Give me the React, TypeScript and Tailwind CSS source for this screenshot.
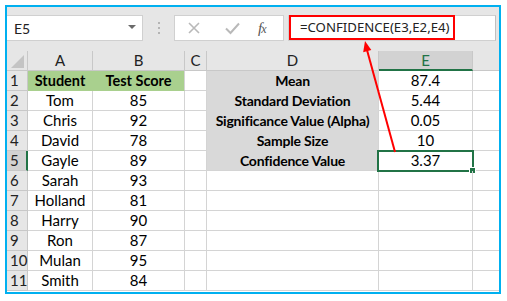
import React from "react"

const students: [string, number][] = [
  ["Tom", 85],
  ["Chris", 92],
  ["David", 78],
  ["Gayle", 89],
  ["Sarah", 93],
  ["Holland", 81],
  ["Harry", 90],
  ["Ron", 87],
  ["Mulan", 95],
  ["Smith", 84],
]

const stats: [string, string][] = [
  ["Mean", "87.4"],
  ["Standard Deviation", "5.44"],
  ["Significance Value (Alpha)", "0.05"],
  ["Sample Size", "10"],
  ["Confidence Value", "3.37"],
]

const cell = "h-[20px] shrink-0 flex items-center justify-center border-r border-b"

function FormulaBar() {
  return (
    <div className="h-[44px] shrink-0 flex items-start pt-[8px]">
      <div className="w-[136px] h-[26px] bg-white border border-[#d0d0d0] border-l-0 flex items-center justify-between pl-[7px] pr-[6px]">
        <span className="text-[14px] text-[#222]">E5</span>
        <span className="w-0 h-0 border-l-[4px] border-r-[4px] border-t-[4px] border-l-transparent border-r-transparent border-t-[#6a6a6a] mb-[3px]" />
      </div>
      <div className="w-[31px] h-[26px] flex flex-col items-center justify-center gap-[3px]">
        <span className="w-[2px] h-[2px] bg-[#b4b4b4]" />
        <span className="w-[2px] h-[2px] bg-[#b4b4b4]" />
        <span className="w-[2px] h-[2px] bg-[#b4b4b4]" />
      </div>
      <div className="w-[110px] h-[26px] bg-white border border-[#d0d0d0] flex items-center">
        <svg width="38" height="24" viewBox="0 0 38 24" className="shrink-0">
          <path d="M14 7 L24 17 M24 7 L14 17" stroke="#b9b9b9" strokeWidth="1.6" fill="none" />
        </svg>
        <svg width="38" height="24" viewBox="0 0 38 24" className="shrink-0">
          <path d="M13 12.5 L17.5 17 L26 7.5" stroke="#b9b9b9" strokeWidth="2" fill="none" />
        </svg>
        <span className="ml-[7px] text-[15px] italic text-[#555] font-['Liberation_Serif',serif] tracking-[-1px]">
          f<span className="text-[12px]">x</span>
        </span>
      </div>
      <div className="ml-[4px] flex-1 h-[26px] bg-white border border-[#d0d0d0] border-r-[#c0c0c0] mr-[3px] relative">
        <div className="absolute left-0 top-[-1px] w-[166px] h-[25px] border-2 border-[#ff0000] flex items-center pl-[9px]">
          <span className="text-[13.2px] text-[#222] font-['Noto_Sans',sans-serif]">=CONFIDENCE(E3,E2,E4)</span>
        </div>
      </div>
    </div>
  )
}

function HeaderRow() {
  const cols: [string, string][] = [
    ["A", "w-[65px]"],
    ["B", "w-[92px]"],
    ["C", "w-[22px]"],
    ["D", "w-[172px]"],
  ]
  return (
    <div className="flex text-[15px] text-[#222]">
      <div className={`${cell} w-[21px] bg-[#e6e6e6] border-[#c8c8c8] items-end justify-end pr-[3px] pb-[2px]`}>
        <svg width="13" height="13" viewBox="0 0 13 13">
          <polygon points="13,0 13,13 0,13" fill="#c4c4c4" />
        </svg>
      </div>
      {cols.map(([c, w]) => (
        <div key={c} className={`${cell} ${w} bg-[#e6e6e6] border-[#c8c8c8]`}>{c}</div>
      ))}
      <div className={`${cell} w-[94px] bg-[#d2d2d2] border-r-[#c8c8c8] border-b-2 border-b-[#217346] text-[#217346]`}>E</div>
      <div className={`${cell} flex-1 bg-[#e6e6e6] border-[#c8c8c8] border-r-0`} />
    </div>
  )
}

function Row({ n }: { n: number }) {
  const s = students[n - 2]
  const st = stats[n - 1]
  const sel = n === 5
  return (
    <div className="flex text-[15px] text-black">
      <div
        className={`${cell} w-[21px] justify-start pl-[3px] text-[#222] ${
          sel ? "bg-[#d2d2d2] border-b-[#c8c8c8] border-r-2 border-r-[#217346]" : "bg-[#e6e6e6] border-[#c8c8c8]"
        }`}
      >
        {n}
      </div>
      {n === 1 ? (
        <>
          <div className={`${cell} w-[65px] bg-[#a9d08e] border-[#a9d08e] font-bold text-[14.5px]`}>Student</div>
          <div className={`${cell} w-[92px] bg-[#a9d08e] border-b-[#a9d08e] border-r-[#d4d4d4] font-bold text-[14.5px]`}>Test Score</div>
        </>
      ) : (
        <>
          <div className={`${cell} w-[65px] border-[#d4d4d4]`}>{s[0]}</div>
          <div className={`${cell} w-[92px] border-[#d4d4d4]`}>{s[1]}</div>
        </>
      )}
      <div className={`${cell} w-[22px] border-[#d4d4d4]`} />
      {st ? (
        <div
          className={`${cell} w-[172px] bg-[#d9d9d9] border-r-[#d4d4d4] font-bold text-[14px] tracking-[-0.2px] ${
            n < 5 ? "border-b-[#d9d9d9]" : "border-b-[#d4d4d4]"
          }`}
        >
          {st[0]}
        </div>
      ) : (
        <div className={`${cell} w-[172px] border-[#d4d4d4]`} />
      )}
      <div className={`${cell} w-[94px] border-[#d4d4d4] relative`}>
        {st ? st[1] : ""}
        {sel && (
          <>
            <div className="absolute left-[-2px] top-[-1px] right-[-2px] bottom-[-2px] border-2 border-[#217346]" />
            <div className="absolute right-[-4px] bottom-[-4px] w-[5px] h-[5px] bg-[#217346] border border-white box-content" />
          </>
        )}
      </div>
      <div className={`${cell} flex-1 border-[#d4d4d4] border-r-0`} />
    </div>
  )
}

export default function App() {
  const rows = Array.from({ length: 11 }, (_, i) => i + 1)
  return (
    <div className="w-[507px] h-[301px] bg-white pt-[5px] pl-[5px] relative font-['Lato',sans-serif]">
      <div className="w-[496px] h-[289px] border-2 border-[#00b0f0] bg-[#e6e6e6] flex flex-col overflow-hidden">
        <FormulaBar />
        <HeaderRow />
        <div className="bg-white flex-1">
          {rows.map((n) => (
            <Row key={n} n={n} />
          ))}
        </div>
      </div>
      <svg className="absolute left-0 top-0 pointer-events-none" width="507" height="301" viewBox="0 0 507 301">
        <line x1="395" y1="152" x2="367" y2="50" stroke="#ff0000" strokeWidth="2" />
        <polygon points="365,41 371.3,50 363.2,52.2" fill="#ff0000" />
      </svg>
    </div>
  )
}
